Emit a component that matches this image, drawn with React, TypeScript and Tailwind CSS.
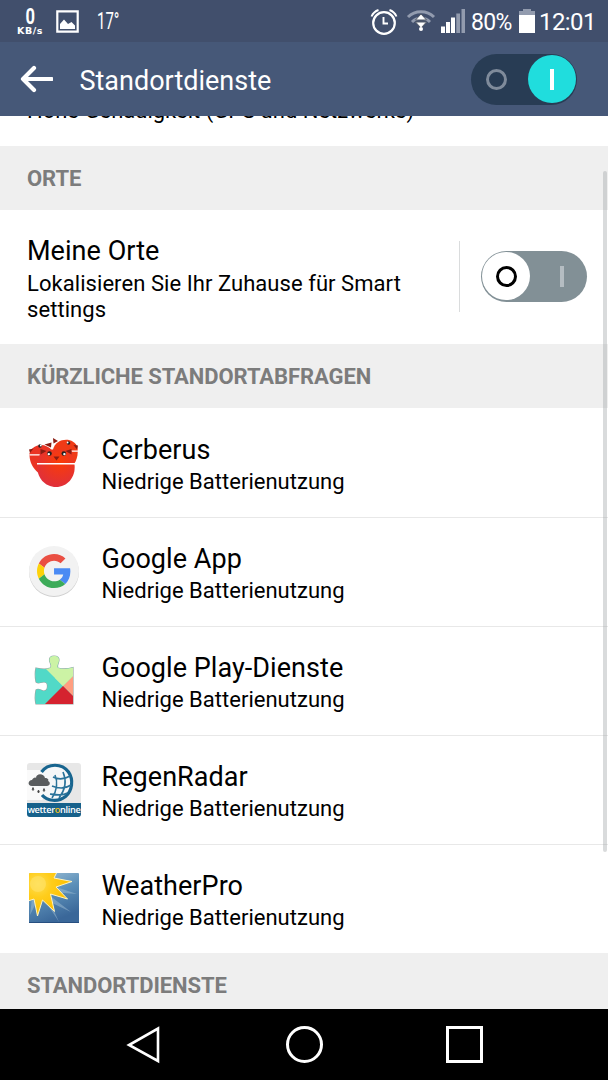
import { ReactNode, useState } from "react";
import { clsx } from "clsx";

const CerberusIcon = () => (
  <svg width="54" height="54" viewBox="0 -3.5 54 54">
    <defs>
      <radialGradient id="cerberus" cx="0.6" cy="0.3" r="0.7">
        <stop offset="0" stopColor="#fb3c06" />
        <stop offset="1" stopColor="#e0303a" />
      </radialGradient>
    </defs>
    <path d="M2.500 14 C6 3.500 19 3 25 11 V38 C13 38 2 28 2.500 14Z" fill="#ea3424" />
    <path d="M26 10 C29 -2 47 -3 50.500 8 C52 19 47 27 40 31 L26 20Z" fill="#f03a16" />
    <path d="M2 10 L6.500 9 L3 13.500Z M17.500 5 L24.500 3 L24 8Z M26 -1.500 L31 1.500 L26.500 4Z M51 6 L46.500 5.500 L50 10Z" fill="#8b1c12" />
    <path d="M2.500 15.300 H13 M43 11.700 H51" stroke="#fff" strokeWidth="1.200" />
    <circle cx="13" cy="6.500" r="1.800" fill="#222" />
    <circle cx="13.800" cy="6" r="0.900" fill="#fff" />
    <circle cx="41.500" cy="3.500" r="1.800" fill="#222" />
    <circle cx="40.600" cy="3" r="0.900" fill="#fff" />
    <path d="M13.500 11 C20 9.500 38 9.500 44.500 11 L47.500 25 C49 38 40 47.500 29 47.500 C18 47.500 9 38 10.500 25Z" fill="url(#cerberus)" />
    <path d="M13.500 9.500 L19.500 11.500 L13.500 15Z M44.500 9.500 L38.500 11.500 L44.500 15Z M26.500 17 H32.500 L29.500 21Z" fill="#8b1c12" />
    <circle cx="22.500" cy="14" r="2.300" fill="#222" />
    <circle cx="21.800" cy="14.600" r="1.200" fill="#fff" />
    <circle cx="36.800" cy="14" r="2.300" fill="#222" />
    <circle cx="37.400" cy="14.600" r="1.200" fill="#fff" />
    <path d="M10 24.300 H48" stroke="#fff" strokeWidth="1.500" />
  </svg>
);

const GoogleIcon = () => (
  <svg width="54" height="54" viewBox="0 0 54 54">
    <circle cx="27" cy="27" r="25" fill="#cfcfcf" />
    <circle cx="27" cy="26" r="25" fill="#f2f2f2" />
    <g transform="translate(10 9) scale(0.710)">
      <path fill="#ea4f43" d="M24 9.500c3.540 0 6.710 1.220 9.210 3.600l6.850-6.850C35.900 2.380 30.470 0 24 0 14.620 0 6.510 5.380 2.560 13.220l7.980 6.190C12.430 13.720 17.740 9.500 24 9.500z" />
      <path fill="#4a8af4" d="M46.980 24.550c0-1.570-.150-3.090-.380-4.550H24v9.020h12.940c-.580 2.960-2.260 5.480-4.780 7.180l7.730 6c4.510-4.180 7.090-10.360 7.090-17.650z" />
      <path fill="#fdd20a" d="M10.530 28.590c-.480-1.450-.760-2.990-.760-4.590s.270-3.140.760-4.590l-7.980-6.190C.92 16.460 0 20.120 0 24c0 3.880.920 7.540 2.560 10.780l7.970-6.190z" />
      <path fill="#3dab59" d="M24 48c6.480 0 11.930-2.130 15.890-5.810l-7.730-6c-2.150 1.450-4.920 2.300-8.160 2.300-6.260 0-11.570-4.220-13.470-9.910l-7.980 6.190C6.510 42.620 14.620 48 24 48z" />
    </g>
  </svg>
);

const PlayServicesIcon = () => (
  <svg width="54" height="54" viewBox="0 0 54 54">
    <defs>
      <clipPath id="puzzle">
        <path d="M9 14 C15 15.500 20 15.500 23 14 C26 12 22.500 9 22.500 6 C22.500 3 24 2 27 2 C31 2 32 4 32 6 C32 9 29 12 31 14 C36 15.500 41 15 46 13.500 V50 H9 C8 46 8 41 9 36 C12 34 14 37 17 37 C20 37 20.500 34 20.500 32 C20.500 29 19 28 17 28 C13 28 12 30 9 28 C8 23 8 18 9 14Z" />
      </clipPath>
    </defs>
    <path
      d="M9 14 C15 15.500 20 15.500 23 14 C26 12 22.500 9 22.500 6 C22.500 3 24 2 27 2 C31 2 32 4 32 6 C32 9 29 12 31 14 C36 15.500 41 15 46 13.500 V50 H9 C8 46 8 41 9 36 C12 34 14 37 17 37 C20 37 20.500 34 20.500 32 C20.500 29 19 28 17 28 C13 28 12 30 9 28 C8 23 8 18 9 14Z"
      fill="none"
      stroke="#9ba5a2"
      strokeWidth="1.200"
    />
    <g clipPath="url(#puzzle)">
      <path d="M0 0 H54 V54 H0Z" fill="#51d9c7" />
      <path d="M6 0 H54 V14 L36 32 L18 14Z" fill="#ccf3a5" />
      <path d="M36 32 L54 14 V50Z" fill="#ff9e80" />
      <path d="M46 14 V22 L36 32 L28 24Z" fill="#ccf3a5" />
      <path d="M36 32 L56 52 H16Z" fill="#d5232f" />
    </g>
  </svg>
);

const RegenRadarIcon = () => (
  <div className="flex h-[54px] w-[54px] flex-col overflow-hidden rounded-[3px]">
    <svg width="54" height="40" viewBox="0 0 54 40" className="bg-[#e7e7e7]">
      <path d="M0 7 H15 L25 26 L15 37 H0Z" fill="#fafafa" />
      <circle cx="27.500" cy="20" r="16.500" fill="#f5f7f8" />
      <path d="M14.500 9 C21 0 35 0 41.500 9 C47 17 45 28 38.500 33.500 C31 39.500 20 38 15 32" fill="none" stroke="#18658f" strokeWidth="3.200" />
      <path d="M26 14 C32 17 38 16 43 13 M25 23 C32 26 38 26 44 22 M23 31 C30 32 36 33 40 30 M28 12 C31 19 30 28 25 35 M36 9 C40 18 38 27 32 35" fill="none" stroke="#2a739a" strokeWidth="1.600" />
      <path d="M5 23 C0 23 1 17 5 17 C6 15 8 14 9 15 C9 10 17 10 18 15 C21 15 22 17 21 18 C24 19 23 23 20 23Z" fill="#595c5e" />
      <path d="M6 24.500 q1.600 2 0 3 q-1.600 -1 0 -3 M11.500 27 q1.600 2 0 3 q-1.600 -1 0 -3 M17 25.500 q1.600 2 0 3 q-1.600 -1 0 -3" fill="#444" stroke="#444" strokeWidth="0.800" />
    </svg>
    <div className="flex h-[14px] items-center justify-center bg-[#16618b] font-['Open_Sans',sans-serif] text-[9.200px] leading-[14px] font-semibold tracking-[-0.320px] text-white">
      wetter<span className="text-[#f5c518]">o</span>nline
    </div>
  </div>
);

const WeatherProIcon = () => (
  <svg width="54" height="54" viewBox="0 0 54 54">
    <defs>
      <linearGradient id="sky" x1="0" y1="0" x2="0.4" y2="1">
        <stop offset="0" stopColor="#a5c4d9" />
        <stop offset="0.500" stopColor="#5c90b9" />
        <stop offset="1" stopColor="#3a6799" />
      </linearGradient>
      <radialGradient id="sun" gradientUnits="userSpaceOnUse" cx="11" cy="12" r="30">
        <stop offset="0" stopColor="#ffdf52" />
        <stop offset="0.450" stopColor="#ffcd1c" />
        <stop offset="1" stopColor="#ffc000" />
      </radialGradient>
      <clipPath id="sky-box">
        <rect x="2" y="1" width="50" height="50" rx="1" />
      </clipPath>
    </defs>
    <g clipPath="url(#sky-box)">
      <rect x="2" y="1" width="50" height="50" fill="url(#sky)" />
      <path d="M24 20 L50 22 L29 15Z M22 23 L44 40 L25 31Z M17 27 L32 50 L24 32Z M5 26 L3 43 L10 29Z" fill="#a8c5d9" opacity="0.450" />
      <path d="M1 0 H30 L27 6 L45 9.500 L29 15 L40.500 27 L23.500 22 L27.500 39.500 L15.500 28 L10.500 44 L7 27 L1 29Z" fill="url(#sun)" stroke="#fff3c0" strokeWidth="1" />
      <circle cx="11" cy="12" r="8" fill="#ffe26a" opacity="0.600" />
    </g>
    <path d="M2 50.500 H52" stroke="#274f80" />
  </svg>
);

type AppType = { name: string; icon: ReactNode };

const apps: AppType[] = [
  { name: "Cerberus", icon: <CerberusIcon /> },
  { name: "Google App", icon: <GoogleIcon /> },
  { name: "Google Play-Dienste", icon: <PlayServicesIcon /> },
  { name: "RegenRadar", icon: <RegenRadarIcon /> },
  { name: "WeatherPro", icon: <WeatherProIcon /> },
];

const StatusBar = () => (
  <div className="flex h-[42px] shrink-0 items-center bg-[#414f6c] pl-4 text-white">
    <div className="flex w-7 flex-col items-center font-bold">
      <span className="text-[22px] leading-[18px] [transform:scaleX(0.750)]">0</span>
      <span className="font-['DejaVu_Sans',sans-serif] text-[9.500px] leading-[9px] tracking-[0.600px]">
        KB/s
      </span>
    </div>
    <svg className="ml-3" width="23" height="23" viewBox="0 0 23 23">
      <path d="M1.300 1.300 H21.700 V21.700 H1.300Z" fill="none" stroke="#fff" strokeWidth="2.200" />
      <path d="M4 19 V14 L8 9.500 L12 14 L15.500 12 L19 15.500 V19Z" fill="#fff" />
    </svg>
    <span className="ml-[18px] w-[24px] origin-left pt-px text-[23px] leading-[42px] whitespace-nowrap [transform:scaleX(0.650)]">
      17°
    </span>
    <svg className="ml-auto" width="28" height="28" viewBox="0 0 28 28">
      <g fill="none" stroke="#fff" strokeWidth="2.200">
        <circle cx="14" cy="16" r="10.800" />
        <path d="M13.500 10 V16.500 H18" strokeWidth="1.900" />
        <path d="M1.500 9.500 C3 6 5.500 4 8.500 3 M26.500 9.500 C25 6 22.500 4 19.500 3" strokeWidth="1.900" />
      </g>
    </svg>
    <svg className="ml-[8px]" width="30" height="24" viewBox="0 0 30 24">
      <g fill="none" stroke="#929bae" strokeWidth="3">
        <path d="M2 8 C9 1 21 1 28 8" />
        <path d="M6 13 C11 8 19 8 24 13" />
      </g>
      <path d="M15 5 L20.500 11 H9.500Z M15 19 L20.500 13 H9.500Z" fill="#fff" stroke="#555c68" strokeWidth="1" />
      <circle cx="15" cy="20" r="2" fill="#fff" />
    </svg>
    <svg className="ml-[5px]" width="24" height="24" viewBox="0 0 24 24">
      <path d="M0 17.500 H4 V24 H0Z M5 13 H9 V24 H5Z M10 8.500 H14 V24 H10Z" fill="#fff" />
      <path d="M15.300 4.500 H19 V24 H15.300Z M20.500 0 H24 V24 H20.500Z" fill="#929bae" />
    </svg>
    <span className="ml-[6px] w-[42px] pt-[2px] text-[23px] leading-none tracking-[-0.700px]">80%</span>
    <svg className="ml-[6px]" width="16" height="24" viewBox="0 0 16 24">
      <path d="M4 0 H12 V2 H16 V6 H0 V2 H4Z" fill="#929bae" />
      <path d="M0 6 H16 V24 H0Z" fill="#fff" />
    </svg>
    <span className="mr-[13px] ml-1 w-[56px] pt-[2px] text-[24px] leading-none tracking-[-0.600px]">
      12:01
    </span>
  </div>
);

const Switch = ({ on, onClick, dark }: { on: boolean; onClick: () => void; dark?: boolean }) => (
  <button
    onClick={onClick}
    className={clsx(
      "flex h-[51px] w-[106px] shrink-0 items-center rounded-full p-px",
      dark ? "bg-[#283c54]" : "bg-[#829096]"
    )}
  >
    <span
      className={clsx(
        "flex h-[48px] w-[48px] items-center justify-center rounded-full",
        !on && "bg-white"
      )}
    >
      <span
        className={clsx(
          "h-[21px] w-[21px] rounded-full",
          on ? "border-[3px] border-[#7f8b9b]" : "border-[3.500px] border-black"
        )}
      />
    </span>
    <span
      className={clsx(
        "ml-auto flex h-[48px] w-[48px] items-center justify-center rounded-full",
        on && "bg-[#20dddd]"
      )}
    >
      <span className={clsx("h-[21px] w-1", on ? "bg-white" : "bg-[#b5bdc2]")} />
    </span>
  </button>
);

const SectionTitle = ({ children }: { children: ReactNode }) => (
  <h2 className="flex h-16 shrink-0 items-center bg-[#efefef] pt-px pl-[27px] text-[22px] font-bold tracking-[-0.080px] text-[#7c7c7c]">
    {children}
  </h2>
);

const App = () => {
  const [location, setLocation] = useState(true);
  const [places, setPlaces] = useState(false);

  return (
    <div className="flex h-[1080px] w-[608px] flex-col overflow-hidden bg-white font-[Roboto,sans-serif] text-black">
      <StatusBar />
      <header className="flex h-[74px] shrink-0 items-center bg-[#465878] pr-[31px] pl-[19px] text-white">
        <svg width="34" height="28" viewBox="0 0 34 28">
          <path
            d="M15 3 L4 14 L15 25 M4 14 H32.500"
            fill="none"
            stroke="#fff"
            strokeWidth="4.200"
            strokeLinecap="round"
            strokeLinejoin="round"
          />
        </svg>
        <h1 className="ml-[26.500px] flex-1 pt-[4px] text-[27px]">Standortdienste</h1>
        <Switch dark on={location} onClick={() => setLocation(!location)} />
      </header>

      <main className="relative flex min-h-0 flex-1 flex-col overflow-hidden">
        <div className="flex h-[30px] shrink-0 flex-col justify-end overflow-hidden pb-[22px] pl-[27px]">
          <p className="text-[22px] leading-[26px]">Hohe Genauigkeit (GPS und Netzwerke)</p>
        </div>

        <SectionTitle>ORTE</SectionTitle>
        <div className="flex h-[134px] shrink-0 items-center pr-[21px] pl-[27px]">
          <div className="flex-1 pt-[4px]">
            <p className="text-[27px] leading-8 tracking-[0.050px]">Meine Orte</p>
            <p className="mt-[4px] w-[400px] text-[22px] leading-[26px] tracking-[0.060px]">
              Lokalisieren Sie Ihr Zuhause für Smart settings
            </p>
          </div>
          <div className="mr-[21px] mb-px h-[71px] w-[1.500px] bg-[#dadcdd]" />
          <div className="mb-[2px] flex">
            <Switch on={places} onClick={() => setPlaces(!places)} />
          </div>
        </div>

        <SectionTitle>KÜRZLICHE STANDORTABFRAGEN</SectionTitle>
        {apps.map((app, index) => {
          return (
            <div
              key={app.name}
              className={clsx(
                "flex h-[109px] shrink-0 items-center gap-[20.500px] border-t pl-[27px]",
                index > 0 ? "border-[#e8e8e8]" : "border-white"
              )}
            >
              {app.icon}
              <div className="pt-[3px]">
                <p className="text-[27px] leading-8 tracking-[0.050px]">{app.name}</p>
                <p className="mt-[3px] text-[22px] leading-[26px] tracking-[0.020px]">
                  Niedrige Batterienutzung
                </p>
              </div>
            </div>
          );
        })}
        <SectionTitle>STANDORTDIENSTE</SectionTitle>

        {/* scroll indicator */}
        <div className="absolute top-[55px] right-px h-[681px] w-1 rounded-full bg-[#a0a4a8]/40" />
      </main>

      <nav className="flex h-[71px] shrink-0 items-center bg-black">
        <svg className="ml-[126px]" width="36" height="38" viewBox="0 0 36 38">
          <path d="M32 2.500 V35 L3 19Z" fill="none" stroke="#fff" strokeWidth="2.600" />
        </svg>
        <div className="ml-[124px] h-[37px] w-[37px] rounded-full border-[3px] border-white" />
        <div className="ml-[123px] h-[37px] w-[37px] border-[3px] border-white" />
      </nav>
    </div>
  );
};

export default App;
